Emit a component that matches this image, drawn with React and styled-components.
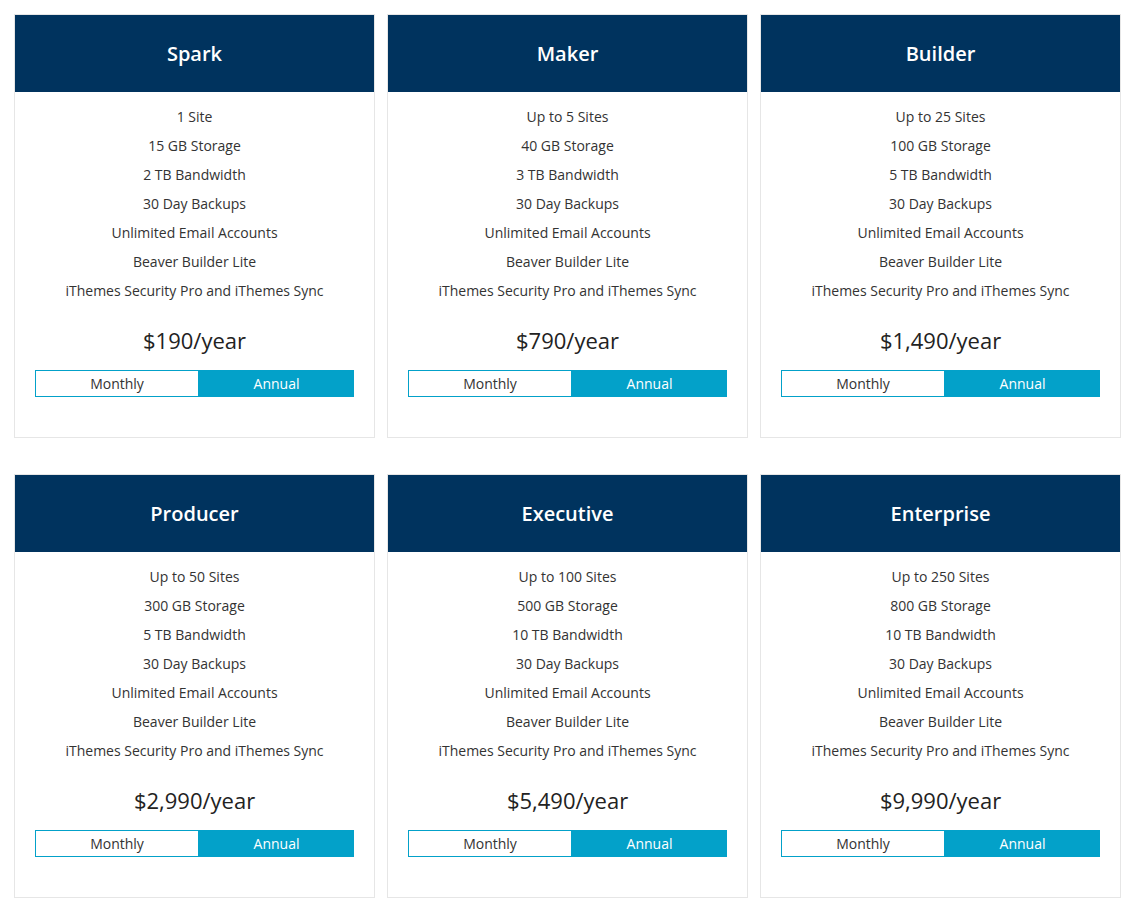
import React from "react";
import styled, { createGlobalStyle } from "styled-components";

const GlobalStyle = createGlobalStyle`
  body {
    margin: 0;
    background: #fff;
    font-family: "Open Sans", "Liberation Sans", sans-serif;
    color: #333;
  }
`;

const Page = styled.div`
  padding: 14px 0 0 14px;
`;

const Grid = styled.div`
  display: grid;
  grid-template-columns: repeat(3, 361px);
  column-gap: 12px;
  row-gap: 36px;
`;

const Card = styled.div`
  border: 1px solid #e6e6e6;
  background: #fff;
  padding-bottom: 40px;
  text-align: center;
`;

const Header = styled.div`
  height: 77px;
  background: #00335e;
  display: flex;
  align-items: center;
  justify-content: center;
`;

const Title = styled.h3`
  margin: 0;
  color: #fff;
  font-size: 20px;
  font-weight: 600;
`;

const Features = styled.ul`
  list-style: none;
  margin: 0;
  padding: 10px 0 0;
`;

const Feature = styled.li`
  font-size: 14px;
  line-height: 29px;
  color: #333;
`;

const Price = styled.div`
  margin-top: 20px;
  font-size: 22px;
  line-height: 30px;
  font-weight: 500;
  color: #222;
`;

const Toggle = styled.div`
  display: flex;
  margin: 15px 20px 0 20px;
  height: 27px;
`;

const Option = styled.button`
  flex: ${(p) => (p.active ? "156px" : "163px")} 0 0;
  border: 1px solid #03a1c9;
  border-right: none;
  background: ${(p) => (p.active ? "#03a1c9" : "#fff")};
  color: ${(p) => (p.active ? "#fff" : "#333")};
  font-family: inherit;
  font-size: 14px;
  padding: 0;
  cursor: pointer;
`;

const plans = [
  { name: "Spark", sites: "1 Site", storage: "15 GB Storage", bw: "2 TB Bandwidth", price: "$190/year" },
  { name: "Maker", sites: "Up to 5 Sites", storage: "40 GB Storage", bw: "3 TB Bandwidth", price: "$790/year" },
  { name: "Builder", sites: "Up to 25 Sites", storage: "100 GB Storage", bw: "5 TB Bandwidth", price: "$1,490/year" },
  { name: "Producer", sites: "Up to 50 Sites", storage: "300 GB Storage", bw: "5 TB Bandwidth", price: "$2,990/year" },
  { name: "Executive", sites: "Up to 100 Sites", storage: "500 GB Storage", bw: "10 TB Bandwidth", price: "$5,490/year" },
  { name: "Enterprise", sites: "Up to 250 Sites", storage: "800 GB Storage", bw: "10 TB Bandwidth", price: "$9,990/year" },
];

const common = [
  "30 Day Backups",
  "Unlimited Email Accounts",
  "Beaver Builder Lite",
  "iThemes Security Pro and iThemes Sync",
];

export default function App() {
  return (
    <Page>
      <GlobalStyle />
      <Grid>
        {plans.map((p) => (
          <Card key={p.name}>
            <Header>
              <Title>{p.name}</Title>
            </Header>
            <Features>
              {[p.sites, p.storage, p.bw, ...common].map((f) => (
                <Feature key={f}>{f}</Feature>
              ))}
            </Features>
            <Price>{p.price}</Price>
            <Toggle>
              <Option>Monthly</Option>
              <Option active>Annual</Option>
            </Toggle>
          </Card>
        ))}
      </Grid>
    </Page>
  );
}
